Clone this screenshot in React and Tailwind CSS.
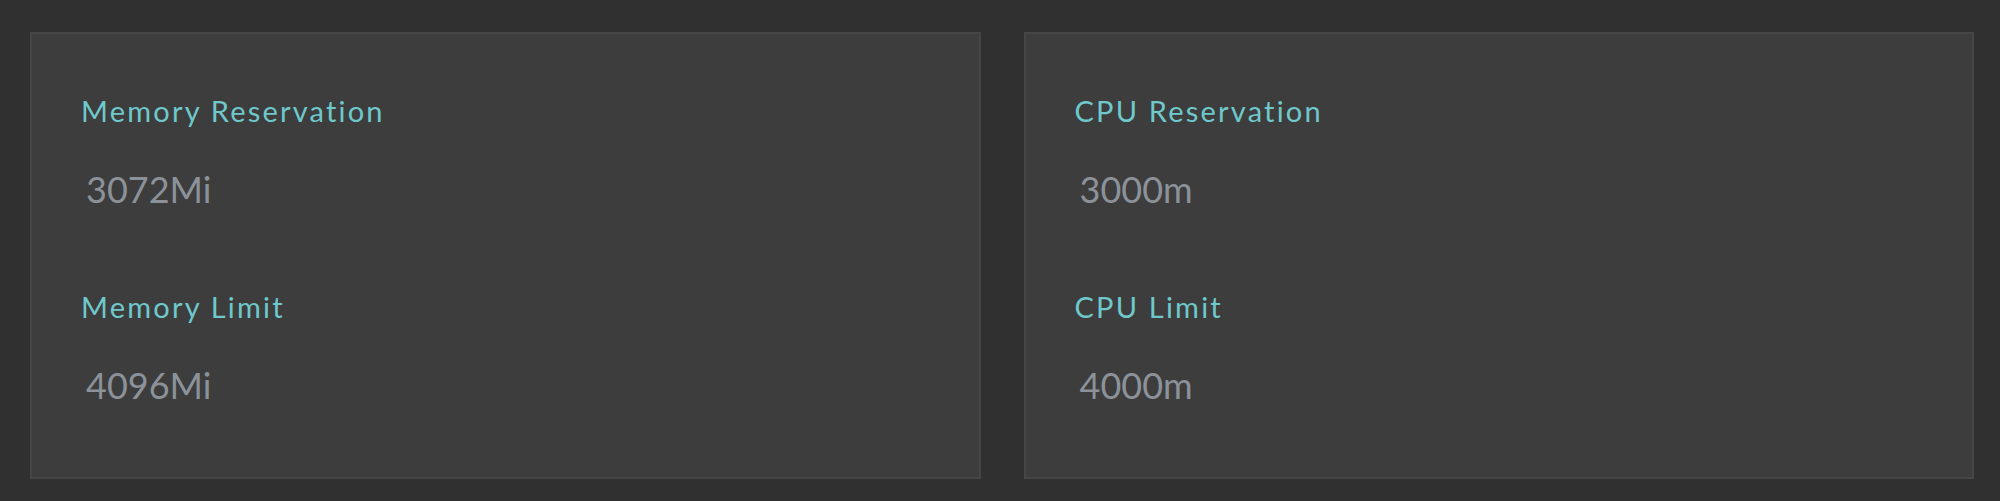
const cards = [
  [
    { label: "Memory Reservation", value: "3072Mi" },
    { label: "Memory Limit", value: "4096Mi" },
  ],
  [
    { label: "CPU Reservation", value: "3000m" },
    { label: "CPU Limit", value: "4000m" },
  ],
];

export default function App() {
  return (
    <div
      className="min-h-[501px] w-full bg-[#303030] pl-[30px] pr-[26px] pt-[32px]"
      style={{ fontFamily: "Lato, 'Open Sans', sans-serif" }}
    >
      <div className="flex gap-[43px]">
        {cards.map((items, i) => (
          <div
            key={i}
            className="flex-1 h-[447px] bg-[#3d3d3d] border-2 border-[#464646] pt-[62px] pl-[49px] flex flex-col gap-[85px]"
          >
            {items.map((it) => (
              <div key={it.label} className="flex flex-col">
                <div className="text-[29px] leading-[29px] text-[#6fc9cc] tracking-[2.2px]">
                  {it.label}
                </div>
                <div className="mt-[46px] pl-[5px] text-[36px] leading-[36px] text-[#8c9299]">
                  {it.value}
                </div>
              </div>
            ))}
          </div>
        ))}
      </div>
    </div>
  );
}
